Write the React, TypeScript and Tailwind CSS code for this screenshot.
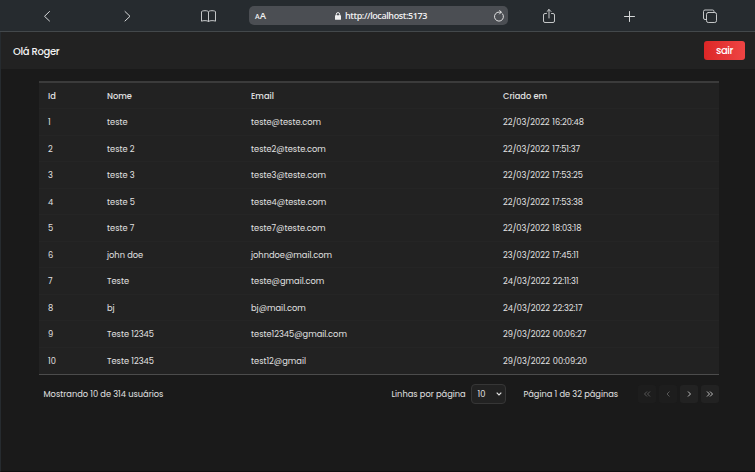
import type { ReactNode } from 'react';

type User = { id: number; name: string; email: string; created: string };

const users: User[] = [
  { id: 1, name: 'teste', email: 'teste@teste.com', created: '22/03/2022 16:20:48' },
  { id: 2, name: 'teste 2', email: 'teste2@teste.com', created: '22/03/2022 17:51:37' },
  { id: 3, name: 'teste 3', email: 'teste3@teste.com', created: '22/03/2022 17:53:25' },
  { id: 4, name: 'teste 5', email: 'teste4@teste.com', created: '22/03/2022 17:53:38' },
  { id: 5, name: 'teste 7', email: 'teste7@teste.com', created: '22/03/2022 18:03:18' },
  { id: 6, name: 'john doe', email: 'johndoe@mail.com', created: '23/03/2022 17:45:11' },
  { id: 7, name: 'Teste', email: 'teste@gmail.com', created: '24/03/2022 22:11:31' },
  { id: 8, name: 'bj', email: 'bj@mail.com', created: '24/03/2022 22:32:17' },
  { id: 9, name: 'Teste 12345', email: 'teste12345@gmail.com', created: '29/03/2022 00:06:27' },
  { id: 10, name: 'Teste 12345', email: 'test12@gmail', created: '29/03/2022 00:09:20' },
];

function Icon({ children, className }: { children: ReactNode; className: string }) {
  return (
    <svg
      viewBox="0 0 16 16"
      fill="none"
      stroke="currentColor"
      strokeLinecap="round"
      strokeLinejoin="round"
      className={className}
    >
      {children}
    </svg>
  );
}

function BrowserBar() {
  return (
    <div className="flex h-8 items-center border-b border-[#43484b] bg-[#262b2f] text-[#d6d8d9]">
      <Icon className="ml-[39px] size-4"><path d="M10.5 3.500 5.500 8.300l5 4.700" /></Icon>
      <Icon className="ml-16 size-4"><path d="m6 3.500 5 4.800-5 4.700" /></Icon>
      <Icon className="ml-[65px] size-4">
        <path strokeWidth="0.9" d="M8.500 4.200C8.500 3 7 2.700 5 2.700c-1.500 0-3 .3-3.500.9v9.600c1.500-.8 5.500-.8 7 .2 1.500-1 5.500-1 7-.2V3.600c-.5-.6-2-.9-3.500-.9-2 0-3.500.3-3.500 1.500v9.200" />
      </Icon>
      <div className="ml-[33px] flex h-[19px] w-[259px] items-center rounded-[5px] bg-[#4b4e53] pl-1.5 pr-[3px] font-['Open_Sans',sans-serif] text-[#f0f0f1]">
        <div className="flex w-4 items-baseline font-semibold leading-none"><span className="text-[7px]">A</span><span className="text-[9.500px]">A</span></div>
        <svg viewBox="0 0 6 8" className="ml-16 h-2 w-1.5" fill="currentColor">
          <path fill="none" stroke="currentColor" d="M1.300 4V2.300a1.700 1.700 0 0 1 3.400 0V4" />
          <rect y="3.300" width="6" height="4.500" rx=".6" />
        </svg>
        <span className="ml-1 whitespace-nowrap text-[9px] font-semibold tracking-[-0.4px]">http://localhost:5173</span>
        <Icon className="ml-auto size-3">
          <path strokeWidth="1.200" d="M12.800 5.200A6 6 0 1 1 8 2.800h3M8.700.5 11 2.800 8.700 5.300" />
        </Icon>
      </div>
      <Icon className="ml-[33px] size-4">
        <path strokeWidth="0.9" d="M5.500 5.500H4A1.500 1.500 0 0 0 2.500 7v6A1.500 1.500 0 0 0 4 14.500h8a1.500 1.500 0 0 0 1.500-1.500V7A1.500 1.500 0 0 0 12 5.500h-1.500M8 10V1.500M6 3.500l2-2 2 2" />
      </Icon>
      <Icon className="ml-16 size-4"><path d="M8.500 3.500v10M3.500 8.500h10" /></Icon>
      <Icon className="ml-[65px] size-4">
        <rect x="4.500" y="4.500" width="10" height="10" rx="1.800" strokeWidth="0.9" />
        <path strokeWidth="0.9" d="M4.500 11.500H3A1.500 1.500 0 0 1 1.500 10V3.500A1.500 1.500 0 0 1 3 2h7.500A1.500 1.500 0 0 1 12 3.500v1" />
      </Icon>
    </div>
  );
}

function Header() {
  return (
    <header className="flex h-[37px] items-center justify-between bg-[#222] pl-3 pr-[10px]">
      <span className="pt-px text-[10px] font-medium tracking-[-0.35px] text-[#f3f3f3]">Olá Roger</span>
      <button className="h-[19px] w-[41px] rounded-[3px] bg-linear-to-r from-[#dc2626] to-[#ef4444] text-[10px] font-medium leading-none tracking-[-0.35px] text-white">sair</button>
    </header>
  );
}

function Table() {
  return (
    <div className="ml-[38px] mt-3 w-[679.500px] border-b border-t-2 border-b-[#4c4c4c] border-t-[#3b3b3b] bg-[#222] text-[8.270px] text-[#e2e2e2]">
      <div className="grid h-[26px] grid-cols-[58px_144px_252px_1fr] items-center border-b border-[#252525] pt-px font-medium">
        <span className="pl-[9px]">Id</span>
        <span className="pl-[10px]">Nome</span>
        <span className="pl-[10px]">Email</span>
        <span className="pl-[10px]">Criado em</span>
      </div>
      {users.map((u) => (
        <div key={u.id} className="grid h-[26.500px] grid-cols-[58px_144px_252px_1fr] items-center border-b border-[#252525] pt-px last:border-b-0">
          <span className="pl-[9px]">{u.id}</span>
          <span className="pl-[10px]">{u.name}</span>
          <span className="pl-[10px]">{u.email}</span>
          <span className="pl-[10px] tracking-[-0.03px] [word-spacing:0.6px]">{u.created}</span>
        </div>
      ))}
    </div>
  );
}

function PageButton({ d, disabled = false }: { d: string; disabled?: boolean }) {
  return (
    <button
      disabled={disabled}
      className="flex size-[18px] items-center justify-center rounded-[3px] bg-[#222] text-[#bdbdbd] disabled:bg-[#1d1d1d] disabled:text-[#575757]"
    >
      <svg viewBox="0 0 8 8" className="size-2" fill="none" stroke="currentColor"><path d={d} /></svg>
    </button>
  );
}

function Pagination() {
  return (
    <div className="ml-[37.500px] mt-[9px] flex h-5 w-[680px] items-center text-[8.270px] text-[#e2e2e2]">
      <span className="ml-[5px] pt-px">Mostrando 10 de 314 usuários</span>
      <div className="ml-auto flex items-center">
        <span className="w-[79px] whitespace-nowrap pt-px">Linhas por página</span>
        <div className="flex h-5 w-[35px] items-center justify-between rounded-[4px] border border-[#363636] bg-[#222] pl-1.5 pr-[3px]">
          <span>10</span>
          <svg viewBox="0 0 6 4" className="h-1 w-1.5" fill="none" stroke="currentColor" strokeWidth="1.200"><path d="m.7.7 2.300 2.300L5.300.7" /></svg>
        </div>
        <span className="ml-[18px] w-[96px] whitespace-nowrap pt-px">Página 1 de 32 páginas</span>
        <div className="ml-[18px] flex gap-[3px]">
          <PageButton disabled d="M4 1.500 1.500 4 4 6.500M7 1.500 4.500 4 7 6.500" />
          <PageButton disabled d="M5.500 1.500 3 4l2.500 2.500" />
          <PageButton d="M3 1.500 5.500 4 3 6.500" />
          <PageButton d="M1 1.500 3.500 4 1 6.500M4 1.500 6.500 4 4 6.500" />
        </div>
      </div>
    </div>
  );
}

export default function App() {
  return (
    <div className="flex h-[472px] w-[755px] flex-col overflow-hidden bg-[#1a1a1a] font-['Poppins','Inter',sans-serif]">
      <BrowserBar />
      <main className="flex-1 border-b border-l border-b-[#100f10] border-l-[#262b2f]">
        <Header />
        <Table />
        <Pagination />
      </main>
    </div>
  );
}
